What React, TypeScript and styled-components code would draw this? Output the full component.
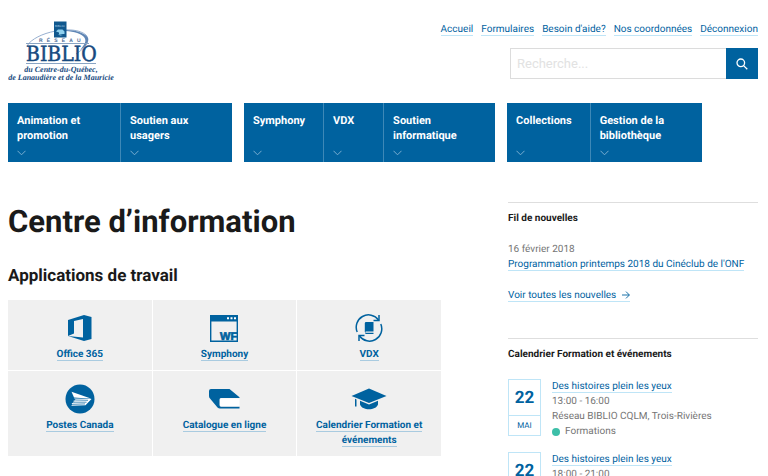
import React from "react";
import styled, { createGlobalStyle } from "styled-components";

const blue = "#00629f";
const paleBlue = "#bfe5f7";

const GlobalStyle = createGlobalStyle`
  * { box-sizing: border-box; }
  body {
    margin: 0;
    background: #fff;
    color: #1a1a1a;
    font: 10px/15px Roboto, "Noto Sans", sans-serif;
    text-rendering: geometricPrecision;
  }
`;

const Page = styled.div`
  padding: 20px 10px 0 8px;
`;

const Header = styled.header`
  display: flex;
  justify-content: space-between;
  align-items: flex-start;
`;

const LogoLink = styled.a`
  display: block;
`;

const HeaderTools = styled.div`
  display: flex;
  flex-direction: column;
  align-items: flex-end;
  gap: 11px;
  padding-top: 2px;
`;

const UtilityNav = styled.nav`
  display: flex;
  gap: 8px;
`;

const TextLink = styled.a<{ $bold?: boolean }>`
  color: ${blue};
  font-weight: ${(p) => (p.$bold ? 700 : 400)};
  text-decoration: none;
  border-bottom: 1px solid ${(p) => (p.$bold ? "#a9cbe0" : paleBlue)};
`;

const SearchForm = styled.form`
  display: flex;
  width: 248px;
  height: 31px;
`;

const SearchInput = styled.input`
  flex: 1;
  min-width: 0;
  padding: 0 6px;
  border: 1px solid #dcdcdc;
  border-right: 0;
  border-radius: 0;
  font: 13px Roboto, "Noto Sans", sans-serif;
  color: #1a1a1a;
  outline: none;
  &::placeholder { color: #e2e2e2; opacity: 1; }
`;

const SearchButton = styled.button`
  display: flex;
  align-items: center;
  justify-content: center;
  width: 32px;
  padding: 0;
  border: 0;
  background: ${blue};
  color: #fff;
`;

const MainNav = styled.nav`
  display: flex;
  gap: 12px;
  margin-top: 15px;
`;

const NavGroup = styled.div`
  display: flex;
  background: ${blue};
`;

const NavButton = styled.button<{ $wide?: boolean }>`
  display: flex;
  flex-direction: column;
  justify-content: space-between;
  align-items: flex-start;
  width: ${(p) => (p.$wide ? "112px" : "auto")};
  min-width: 60px;
  min-height: 59px;
  padding: 10px 18px 6px 9px;
  border: 0;
  background: none;
  color: #fff;
  font: 700 11px/15px Roboto, "Noto Sans", sans-serif;
  text-align: left;
  text-rendering: inherit;
  & + & { border-left: 1px solid #3d88b7; }
`;

const Columns = styled.div`
  display: grid;
  grid-template-columns: minmax(0, 433fr) minmax(0, 250fr);
  column-gap: 67px;
  margin-top: 40px;
`;

const PageTitle = styled.h1`
  margin: 0;
  font-size: 31px;
  line-height: 40px;
`;

const SectionTitle = styled.h2`
  margin: 24px 0 14px;
  font-size: 17px;
  line-height: 20px;
`;

const Tiles = styled.div`
  display: grid;
  grid-template-columns: repeat(3, minmax(0, 1fr));
  gap: 1px;
`;

const Tile = styled.div`
  display: flex;
  flex-direction: column;
  align-items: center;
  gap: 4px;
  padding: 13px 16px 8px;
  background: #f0f0f0;
  text-align: center;
`;

const TileIcon = styled.div`
  display: flex;
  align-items: center;
  height: 30px;
  color: ${blue};
`;

const Side = styled.aside`
  display: flex;
  flex-direction: column;
  gap: 35px;
`;

const SideBlock = styled.section`
  border-top: 1px solid #dedede;
  padding-top: 8px;
`;

const SideTitle = styled.h2`
  margin: 0;
  font-size: 10px;
  line-height: 15px;
`;

const Muted = styled.div`
  color: #757575;
`;

const NewsItem = styled.article`
  margin: 16px 0;
`;

const ArrowLink = styled(TextLink)`
  svg { margin-left: 6px; vertical-align: -1px; }
`;

const EventList = styled.div`
  display: flex;
  flex-direction: column;
  gap: 13px;
  margin-top: 17px;
`;

const EventRow = styled.article`
  display: flex;
  align-items: flex-start;
  gap: 11px;
`;

const DateCard = styled.time`
  width: 33px;
  border: 1px solid ${paleBlue};
  color: ${blue};
  text-align: center;
`;

const Day = styled.div`
  height: 35px;
  font-size: 17px;
  font-weight: 700;
  line-height: 37px;
`;

const Month = styled.div`
  border-top: 1px solid ${paleBlue};
  font-size: 8px;
  line-height: 19px;
`;

const Category = styled(Muted)`
  display: flex;
  align-items: center;
  gap: 5px;
`;

const Dot = styled.span`
  width: 8px;
  height: 8px;
  border-radius: 50%;
  background: #3dbfa8;
`;

const Logo = () => (
  <svg width="108" height="63" viewBox="0 0 108 63" role="img" aria-label="Réseau BIBLIO">
    <path d="M19 26 C27 12 66 4 78 15 C83 21 77 28 68 34" fill="none" stroke="#7d9cc4" strokeWidth="0.800" />
    <path d="M46 11 C62 8 77 12 80 18 C81 23 77 27 72 30 C77 24 79 21 76 17 C69 11 58 10.500 46 11.500Z" fill="#5f86b5" />
    <rect x="46" y="1.500" width="12.500" height="16" fill="#11588e" />
    <text x="47" y="6.500" fontFamily="Liberation Sans, sans-serif" fontSize="3" fill="#a9cee5">BIBLIO</text>
    <path d="M48 11.500 L50 9.500 H54.500 L56.500 11.500 V14 H51 V12.500 Z M50 14 L55 15 L52 15.500 Z" fill="#8ed0ee" />
    <text x="31" y="22" xmlSpace="preserve" fontFamily="Liberation Sans, sans-serif" fontWeight="700" fontSize="5" fill="#4a6c98">{"R\u00a0\u00a0\u00a0É\u00a0\u00a0\u00a0S\u00a0\u00a0\u00a0E\u00a0\u00a0\u00a0A\u00a0\u00a0\u00a0U"}</text>
    <path d="M18 23.500 H81 M18 43.500 H88" stroke="#8aa5c4" strokeWidth="1" />
    <text x="18" y="41" fontFamily="DejaVu Serif Condensed, DejaVu Serif, serif" fontSize="21" fill="#174a80" stroke="#174a80" strokeWidth="0.500">BIBLIO</text>
    <g fontFamily="Liberation Serif, serif" fontWeight="700" fontStyle="italic" fontSize="8" fill="#174a80">
      <text x="53" y="52" textAnchor="middle">du Centre-du-Québec,</text>
      <text x="53" y="60" textAnchor="middle">de Lanaudière et de la Mauricie</text>
    </g>
  </svg>
);

const Chevron = () => (
  <svg width="9" height="6" viewBox="0 0 9 6" fill="none" stroke="#78add0" aria-hidden="true">
    <path d="M.5 .8 L4.500 4.800 L8.500 .8" />
  </svg>
);

const OfficeIcon = () => (
  <svg width="24" height="26" viewBox="0 0 24 26" fill="currentColor" aria-hidden="true">
    <path d="M0 5 L16 0 L23.500 2 V24 L16 26 L0 21 L15 22.600 V4 L6 6 V18.500 L0 21 Z" />
  </svg>
);

const WorkflowsIcon = () => (
  <svg width="28" height="27" viewBox="0 0 28 27" aria-hidden="true">
    <path d="M.7 .7 H27.300 V26.300 H.7 Z" fill="none" stroke="currentColor" strokeWidth="1.400" />
    <path d="M0 0 H28 V6.500 H0 Z" fill="currentColor" />
    <path d="M17 2.300h2v2h-2z M20.500 2.300h2v2h-2z M24 2.300h2v2h-2z" fill="#fff" />
    <text x="10" y="25" fontFamily="Liberation Sans, sans-serif" fontWeight="700" fontSize="11" fill="currentColor" stroke="currentColor" strokeWidth="0.700">WF</text>
  </svg>
);

const ExchangeIcon = () => (
  <svg width="28" height="28" viewBox="0 0 28 28" fill="none" stroke="currentColor" strokeWidth="1.500" aria-hidden="true">
    <path d="M2.200 18 A12.300 12.300 0 0 1 23.500 6 M25.800 10 A12.300 12.300 0 0 1 4.500 22" />
    <path d="M24 1 V6.500 H18.500 M4 27 V21.500 H9.500" />
    <path d="M10.500 8 H18.500 V17.500 H11.500 C9.500 17.500 9.500 20 11.500 20 H18.500 V18.800 H11.500 C10.800 18.800 10 18.500 9.800 18 V9 Z" fill="currentColor" stroke="none" />
  </svg>
);

const PostIcon = () => (
  <svg width="30" height="30" viewBox="0 0 30 30" aria-hidden="true">
    <circle cx="15" cy="15" r="14.500" fill="currentColor" />
    <path d="M6.500 7.800 L26.500 14.800 L9 13.600 Z" fill="#fff" />
    <path d="M9 14.500 L26.500 14.900 L20.500 21.300 L6 21.800 L8 20.300 L6.500 19.500 L9.500 18 L8 17 L11 16 Z" fill="#fff" />
    <path d="M10.500 16 L23 16.300 M9 18.200 L21.500 18.200 M8 20.300 L20 19.900" stroke="currentColor" strokeWidth="0.700" />
  </svg>
);

const CatalogueIcon = () => (
  <svg width="31" height="20" viewBox="0 0 31 20" aria-hidden="true">
    <path d="M2 0 H20.500 L30.500 8.200 V9 H12 Q10.500 9 10.500 10.500 V16 Q10.500 17.800 12 17.800 H30.500 V19.500 H11 Q9.500 19.500 8.500 18.500 L1 9.500 Q0 8.500 0 7 V2 Q0 0 2 0 Z" fill="currentColor" />
    <path d="M12 9.500 H30.500 V17.300 H12 Q11 17.300 11 16 V10.500 Q11 9.500 12 9.500 Z" fill="#fff" />
  </svg>
);

const GraduationIcon = () => (
  <svg width="36" height="22" viewBox="0 0 36 22" fill="currentColor" aria-hidden="true">
    <path d="M18 .5 L35.500 8 L18 15 L.5 8 Z" />
    <path d="M9 12.800 L18 16.500 L27 12.800 V16.500 C25 22.800 11 22.800 9 16.500 Z" />
    <path d="M4 10.800 L5.500 11.400 V18.500 H4 Z" />
  </svg>
);

const utilityLinks = ["Accueil", "Formulaires", "Besoin d'aide?", "Nos coordonnées", "Déconnexion"];

const navGroups = [
  [{ label: "Animation et promotion", wide: true }, { label: "Soutien aux usagers", wide: true }],
  [{ label: "Symphony" }, { label: "VDX" }, { label: "Soutien informatique", wide: true }],
  [{ label: "Collections" }, { label: "Gestion de la bibliothèque", wide: true }],
];

const apps = [
  { label: "Office 365", Icon: OfficeIcon },
  { label: "Symphony", Icon: WorkflowsIcon },
  { label: "VDX", Icon: ExchangeIcon },
  { label: "Postes Canada", Icon: PostIcon },
  { label: "Catalogue en ligne", Icon: CatalogueIcon },
  { label: "Calendrier Formation et événements", Icon: GraduationIcon },
];

interface CalendarEvent {
  hours: string;
  month?: string;
  place?: string;
  category?: string;
}

const events: CalendarEvent[] = [
  { hours: "13:00 - 16:00", month: "MAI", place: "Réseau BIBLIO CQLM, Trois-Rivières", category: "Formations" },
  { hours: "18:00 - 21:00" },
];

export default function App() {
  return (
    <>
      <GlobalStyle />
      <Page>
        <Header>
          <LogoLink href="#"><Logo /></LogoLink>
          <HeaderTools>
            <UtilityNav aria-label="Liens utiles">
              {utilityLinks.map((label) => (
                <div key={label}><TextLink href="#">{label}</TextLink></div>
              ))}
            </UtilityNav>
            <SearchForm role="search" onSubmit={(e) => e.preventDefault()}>
              <SearchInput type="text" aria-label="Recherche" placeholder="Recherche..." />
              <SearchButton type="submit" aria-label="Rechercher">
                <svg width="12" height="12" viewBox="0 0 12 12" fill="none" stroke="currentColor" strokeWidth="1.300" aria-hidden="true">
                  <circle cx="4.800" cy="4.800" r="3.800" />
                  <path d="M7.600 7.600 L11.300 11.300" />
                </svg>
              </SearchButton>
            </SearchForm>
          </HeaderTools>
        </Header>

        <MainNav aria-label="Navigation principale">
          {navGroups.map((group, i) => (
            <NavGroup key={i}>
              {group.map(({ label, wide }: { label: string; wide?: boolean }) => (
                <NavButton key={label} type="button" $wide={wide}>
                  {label}
                  <Chevron />
                </NavButton>
              ))}
            </NavGroup>
          ))}
        </MainNav>

        <Columns>
          <main>
            <PageTitle>Centre d’information</PageTitle>
            <SectionTitle>Applications de travail</SectionTitle>
            <Tiles>
              {apps.map(({ label, Icon }) => (
                <Tile key={label}>
                  <TileIcon><Icon /></TileIcon>
                  <div><TextLink href="#" $bold>{label}</TextLink></div>
                </Tile>
              ))}
            </Tiles>
          </main>

          <Side>
            <SideBlock>
              <SideTitle>Fil de nouvelles</SideTitle>
              <NewsItem>
                <Muted>16 février 2018</Muted>
                <TextLink href="#">Programmation printemps 2018 du Cinéclub de l'ONF</TextLink>
              </NewsItem>
              <ArrowLink href="#">
                Voir toutes les nouvelles
                <svg width="8" height="8" viewBox="0 0 8 8" fill="none" stroke="currentColor" aria-hidden="true">
                  <path d="M0 4 H7.300 M4 .6 L7.400 4 L4 7.400" strokeWidth="0.900" />
                </svg>
              </ArrowLink>
            </SideBlock>
            <SideBlock>
              <SideTitle>Calendrier Formation et événements</SideTitle>
              <EventList>
                {events.map(({ hours, month, place, category }) => (
                  <EventRow key={hours}>
                    <DateCard dateTime="05-22">
                      <Day>22</Day>
                      {month && <Month>{month}</Month>}
                    </DateCard>
                    <div>
                      <TextLink href="#">Des histoires plein les yeux</TextLink>
                      <Muted>{hours}</Muted>
                      {place && <Muted>{place}</Muted>}
                      {category && <Category><Dot />{category}</Category>}
                    </div>
                  </EventRow>
                ))}
              </EventList>
            </SideBlock>
          </Side>
        </Columns>
      </Page>
    </>
  );
}
